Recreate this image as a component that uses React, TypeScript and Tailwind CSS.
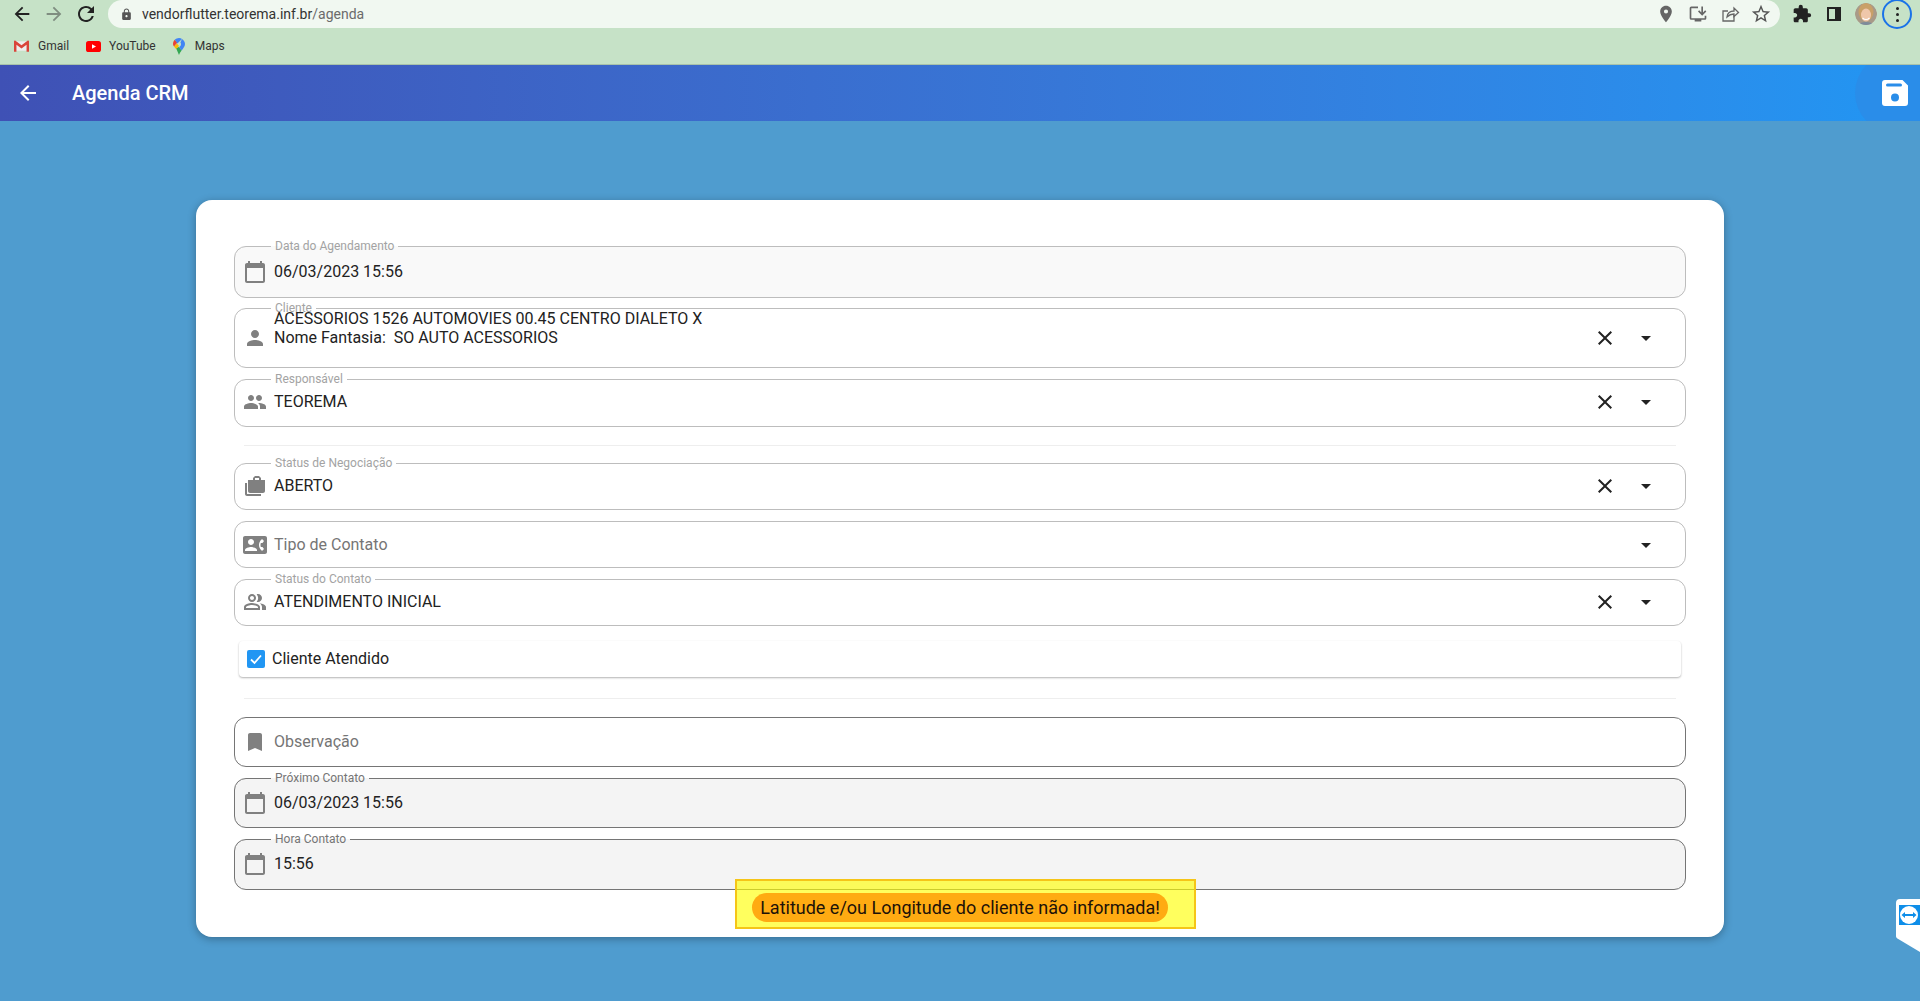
import type { ReactNode } from "react";
import {
  MdArrowBack,
  MdArrowDropDown,
  MdArrowForward,
  MdBookmark,
  MdCalendarToday,
  MdClose,
  MdContactPhone,
  MdExtension,
  MdInstallDesktop,
  MdLocationOn,
  MdLock,
  MdOutlinePeopleAlt,
  MdPeople,
  MdPerson,
  MdRefresh,
  MdStarBorder,
} from "react-icons/md";

type FieldProps = {
  label?: string;
  icon: ReactNode;
  contentClass: string;
  boxClass?: string;
  labelClass?: string;
  actions?: "select" | "dropdown";
  children: ReactNode;
};

function Field({ label, icon, contentClass, boxClass = "border-[#bdbdbd] bg-white", labelClass = "text-[#a3a3a3]", actions, children }: FieldProps) {
  return (
    <fieldset className={`border rounded-xl min-w-0 ${boxClass}`}>
      {label && (
        <legend className={`ml-[36px] px-1 h-[13px] text-xs leading-[13px] ${labelClass}`}>{label}</legend>
      )}
      <div className={`flex items-center pl-2 pr-[27px] ${label ? "pb-[7px]" : ""} ${contentClass}`}>
        <span className="w-6 h-6 mr-[7px] shrink-0 text-[#808080]">{icon}</span>
        <div className="flex-1 min-w-0 relative">{children}</div>
        {actions === "select" && <MdClose size={24} className="text-[#222] mr-[17px]" />}
        {actions && <MdArrowDropDown size={24} className="text-[#222]" />}
      </div>
    </fieldset>
  );
}

function Divider({ className }: { className: string }) {
  return <div className={`h-px bg-[#eeeeee] mx-[10px] ${className}`} />;
}

function ChromeBar() {
  return (
    <div className="h-[65px] bg-[#c6e2c7] border-b border-[#a9c2aa] shrink-0">
      <div className="h-[28px] flex items-center">
        <div className="w-[108px] flex items-center text-[#222] pl-[11px]">
          <MdArrowBack size={22} />
          <MdArrowForward size={22} className="ml-[10px] text-[#7f8d80]" />
          <MdRefresh size={24} className="ml-[9px]" />
        </div>
        <div className="h-full w-[1672px] bg-[#f1f8f1] rounded-[14px] flex items-center pl-[12px]">
          <MdLock size={13} className="text-[#555]" />
          <span className="ml-[9px] text-[14px] text-[#333]">
            vendorflutter.teorema.inf.br<span className="text-[#6b6b6b]">/agenda</span>
          </span>
          <div className="ml-auto flex items-center text-[#666] mr-2">
            <MdLocationOn size={20} />
            <MdInstallDesktop size={20} className="ml-[12px]" />
            <svg viewBox="0 0 20 20" className="w-5 h-5 ml-[12px]" fill="none" stroke="currentColor" strokeWidth="1.3">
              <path d="M14 11v6H3V7h5" />
              <path d="M7 13c.5-4 3-6 7-6V4l4.5 4.5L14 12.500V10c-3 0-5 1-7 3z" />
            </svg>
            <MdStarBorder size={22} className="ml-[10px] text-[#555]" />
          </div>
        </div>
        <MdExtension size={20} className="ml-[12px] text-[#222]" />
        <svg viewBox="0 0 14 14" className="w-[14px] h-[14px] ml-[15px]">
          <path fill="#222" fillRule="evenodd" d="M0 0h14v14H0zM2 2v10h6V2z" />
        </svg>
        <svg viewBox="0 0 22 22" className="w-[22px] h-[22px] ml-[14px] rounded-full">
          <circle cx="11" cy="11" r="11" fill="#a89a88" />
          <ellipse cx="11" cy="9" rx="7.5" ry="9" fill="#c9a068" />
          <ellipse cx="11" cy="12" rx="5" ry="6.500" fill="#efc7aa" />
          <path d="M7.500 15c2 2 5 2 7 0" stroke="#fff" strokeWidth="1.2" fill="none" />
          <path d="M3 22c2-4 14-4 16 0" fill="#7d8b9b" />
        </svg>
        <div className="w-[30px] h-[30px] ml-[5px] rounded-full border-2 border-[#1a73e8] flex flex-col items-center justify-center gap-[3px]">
          <span className="w-[3px] h-[3px] rounded-full bg-[#222]" />
          <span className="w-[3px] h-[3px] rounded-full bg-[#222]" />
          <span className="w-[3px] h-[3px] rounded-full bg-[#222]" />
        </div>
      </div>
      <div className="h-[36px] flex items-center pl-[14px] text-xs text-[#333]">
        <svg viewBox="0 0 16 12" className="w-[15px] h-[12px]">
          <path fill="#eee" d="M1 1h14v10H1z" />
          <path fill="#d9453a" d="M0 1.200C0 .3 1 0 1.600.4L8 5.200 14.400.4c.6-.4 1.600-.1 1.600.8V12h-2.600V4.600L8 8.600 2.600 4.600V12H0z" />
        </svg>
        <span className="ml-[9px]">Gmail</span>
        <svg viewBox="0 0 15 11" className="w-[15px] h-[11px] ml-[17px]">
          <rect width="15" height="11" rx="2.600" fill="#f00" />
          <path fill="#fff" d="M6 3.200v4.600l4-2.300z" />
        </svg>
        <span className="ml-2">YouTube</span>
        <svg viewBox="0 0 12 17" className="w-[12px] h-[17px] ml-[17px]">
          <path fill="#34a853" d="M3 10l3 7c.4-1.600 1.400-3 2.600-4.600L6 9z" />
          <path fill="#fbbc04" d="M1 8.600L3 11l3-3-2-2.400z" />
          <path fill="#ea4335" d="M1 8.600C.4 7.600 0 6.800 0 6c0-1.800.8-3.200 1.800-4.200L4.400 4.600z" />
          <path fill="#4285f4" d="M1.800 1.800C2.900.7 4.400 0 6 0c1.200 0 2.200.3 3 .9L4.400 5.600z" />
          <path fill="#4285f4" d="M9 .9C10.800 2 12 3.800 12 6c0 2.400-1.800 4.400-3.400 6.400L6 9c1.500-.4 2-1.700 2-3 0-.6-.2-1.200-.6-1.600z" />
        </svg>
        <span className="ml-[10px]">Maps</span>
      </div>
    </div>
  );
}

function TeamViewerTab() {
  return (
    <svg viewBox="0 0 24 53" className="absolute right-0 top-[899px] w-6 h-[53px]">
      <path fill="#fff" d="M24 0H4a4 4 0 0 0-4 4v33c0 1 .4 1.800 1.400 2.400L24 53z" />
      <rect x="3" y="6" width="21" height="20" fill="#0e8ee9" />
      <circle cx="13" cy="16" r="9" fill="#fff" />
      <path fill="#0e8ee9" d="M5.500 16l3.500-3v2h8v-2l3.500 3-3.500 3v-2H9v2z" />
    </svg>
  );
}

export default function App() {
  const calendar = <MdCalendarToday size={24} />;
  const solidBox = "border-[#757575] bg-[#f4f4f4]";

  return (
    <div className="relative h-screen overflow-hidden flex flex-col bg-[#4f9ccf] font-[Roboto,sans-serif] text-base text-[#222]">
      <ChromeBar />

      {/* app bar */}
      <header className="h-14 shrink-0 relative overflow-hidden flex items-center pl-[16px] bg-linear-to-r from-[#3f51b5] to-[#2196f3] text-white">
        <MdArrowBack size={24} />
        <h1 className="ml-[32px] text-xl font-medium">Agenda CRM</h1>
        <div className="absolute right-[-15px] top-[-12px] w-20 h-20 rounded-full bg-[#2a8de9] flex items-center justify-center">
          <svg viewBox="0 0 26 26" className="w-[26px] h-[26px]">
            <path fill="#fff" fillRule="evenodd" d="M3 0h17.500L26 5.500V23a3 3 0 0 1-3 3H3a3 3 0 0 1-3-3V3a3 3 0 0 1 3-3zM5.500 3.500a1.500 1.500 0 0 0 0 3h13a1.500 1.500 0 0 0 0-3zM13 13.500a4 4 0 1 0 0 8 4 4 0 0 0 0-8z" />
          </svg>
        </div>
      </header>

      <main className="relative mx-auto mt-[79px] w-[1528px] rounded-2xl bg-white shadow-[0_2px_8px_rgba(0,0,0,0.3)] px-[38px] pt-10 pb-[47px]">
        <Field label="Data do Agendamento" icon={calendar} contentClass="h-[44px]" boxClass="border-[#bdbdbd] bg-[#f9f9f9]">
          06/03/2023 15:56
        </Field>

        <div className="mt-1">
          <Field label="Cliente" icon={<MdPerson size={24} />} contentClass="h-[52px]" actions="select">
            <div className="leading-[19px] -mt-[10px] mb-[10px]">
              <div>ACESSORIOS 1526 AUTOMOVIES 00.45 CENTRO DIALETO X</div>
              <div>Nome Fantasia:&nbsp; SO AUTO ACESSORIOS</div>
            </div>
          </Field>
        </div>

        <div className="mt-[5px]">
          <Field label="Responsável" icon={<MdPeople size={24} />} contentClass="h-[40px] -mt-px mb-px" actions="select">
            TEOREMA
          </Field>
        </div>

        <Divider className="mt-[18px]" />

        <div className="mt-[11px]">
          <Field
            label="Status de Negociação"
            icon={
              <svg viewBox="0 0 24 24" className="w-6 h-6" fill="currentColor">
                <path d="M18 6V4l-2-2h-4l-2 2v2H5v11c0 1.100.9 2 2 2h13c1.100 0 2-.9 2-2V6h-4zM4 9H2v11c0 1.100.9 2 2 2h14v-2H4V9zm8-5h4v2h-4V4z" />
              </svg>
            }
            contentClass="h-[39px]"
            actions="select"
          >
            ABERTO
          </Field>
        </div>

        <div className="mt-[11px]">
          <Field icon={<MdContactPhone size={24} />} contentClass="h-[45px]" actions="dropdown">
            <span className="text-[#757575]">Tipo de Contato</span>
          </Field>
        </div>

        <div className="mt-[5px]">
          <Field label="Status do Contato" icon={<MdOutlinePeopleAlt size={24} />} contentClass="h-[39px]" actions="select">
            ATENDIMENTO INICIAL
          </Field>
        </div>

        <div className="mt-[15px] ml-[5px] mr-[5px] h-9 rounded-sm bg-white shadow-[0_1px_2px_rgba(0,0,0,0.3)] flex items-center pl-2">
          <span className="w-[18px] h-[18px] rounded-[2px] bg-[#2196f3] flex items-center justify-center">
            <svg viewBox="0 0 18 18" className="w-[18px] h-[18px]" fill="none" stroke="#fff" strokeWidth="1.8">
              <path d="M4 9.500l3.500 3.500L14 5.500" />
            </svg>
          </span>
          <span className="ml-[7px]">Cliente Atendido</span>
        </div>

        <Divider className="mt-[21px]" />

        <div className="mt-[18px]">
          <Field icon={<MdBookmark size={24} />} contentClass="h-[48px]" boxClass="border-[#757575] bg-white">
            <span className="text-[#757575]">Observação</span>
          </Field>
        </div>

        <div className="mt-[5px]">
          <Field label="Próximo Contato" icon={calendar} contentClass="h-[42px]" boxClass={solidBox} labelClass="text-[#757575]">
            06/03/2023 15:56
          </Field>
        </div>

        <div className="mt-[5px]">
          <Field label="Hora Contato" icon={calendar} contentClass="h-[43px]" boxClass={solidBox} labelClass="text-[#757575]">
            15:56
          </Field>
        </div>

        {/* yellow highlight drawn over the screenshot */}
        <div className="absolute left-[539px] top-[679px] w-[461px] h-[50px] border-2 border-[#f5c518] bg-[#ffff00]/[.63] pl-[15px] pt-3">
          <div className="h-[29px] w-[416px] rounded-[15px] bg-[#ffab12] flex items-center justify-center text-[18px] text-[#1d1208] whitespace-nowrap">
            Latitude e/ou Longitude do cliente não informada!
          </div>
        </div>
      </main>

      <TeamViewerTab />
    </div>
  );
}
